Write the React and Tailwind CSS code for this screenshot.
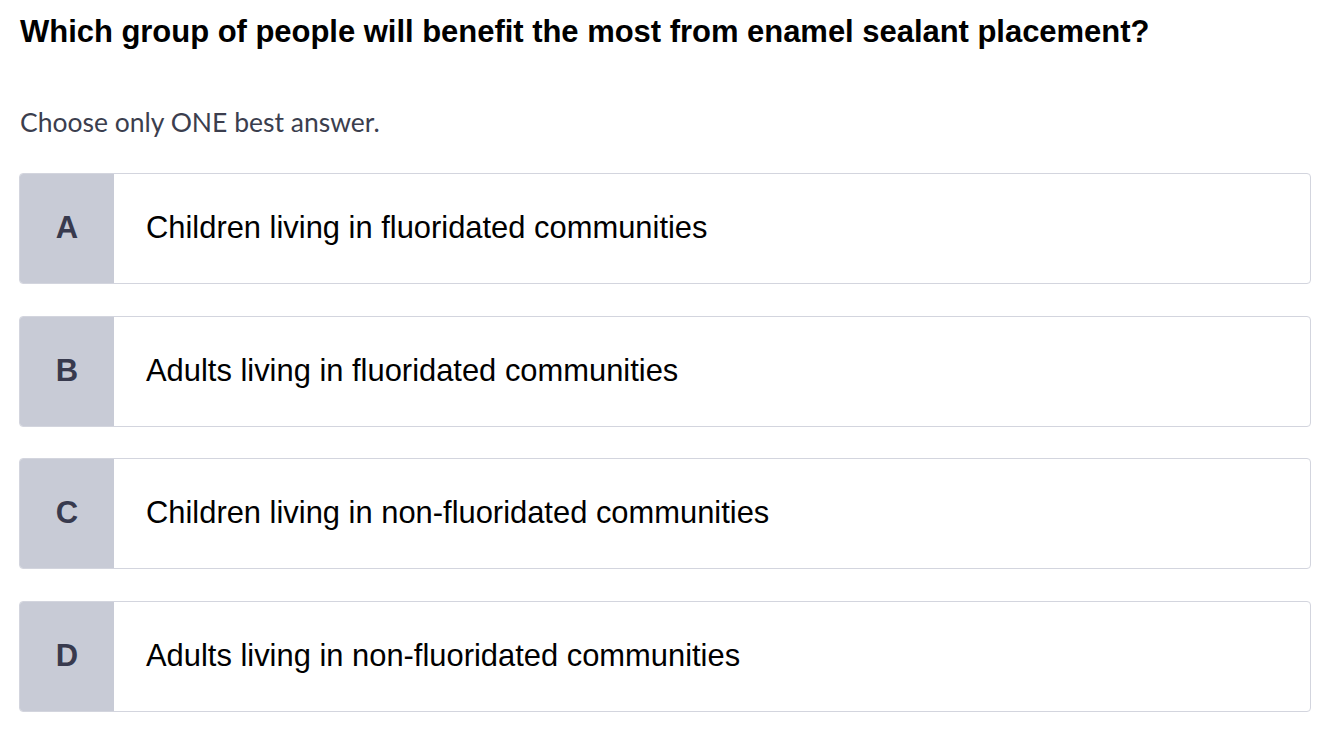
import React from "react";

const answers = [
  { letter: "A", text: "Children living in fluoridated communities" },
  { letter: "B", text: "Adults living in fluoridated communities" },
  { letter: "C", text: "Children living in non-fluoridated communities" },
  { letter: "D", text: "Adults living in non-fluoridated communities" },
];

const App = () => {
  return (
    <div className="min-h-screen bg-white px-[19px] pt-[14px]">
      <h1 className="pl-px text-[31px] font-bold leading-[36px] tracking-[-0.03px] text-black [font-family:'Liberation_Sans',Arial,sans-serif]">
        Which group of people will benefit the most from enamel sealant placement?
      </h1>

      <p className="mt-[54px] pl-px text-[26.5px] leading-[36px] text-[#3b3e4e] [font-family:Lato,sans-serif]">
        Choose only ONE best answer.
      </p>

      <div className="mt-[33px] flex w-[1292px] flex-col gap-[31.5px]">
        {answers.map((a) => (
          <div
            key={a.letter}
            className="flex h-[111px] overflow-hidden rounded-[4px] border border-[#d3d5de] bg-white"
          >
            <div className="flex w-[94px] shrink-0 items-center justify-center bg-[#c8cbd6] text-[31px] font-bold text-[#383a4e] [font-family:'Liberation_Sans',Arial,sans-serif]">
              {a.letter}
            </div>
            <div className="flex items-center pl-[32px] text-[30.9px] text-black [font-family:'Liberation_Sans',Arial,sans-serif]">
              {a.text}
            </div>
          </div>
        ))}
      </div>
    </div>
  );
};

export default App;
